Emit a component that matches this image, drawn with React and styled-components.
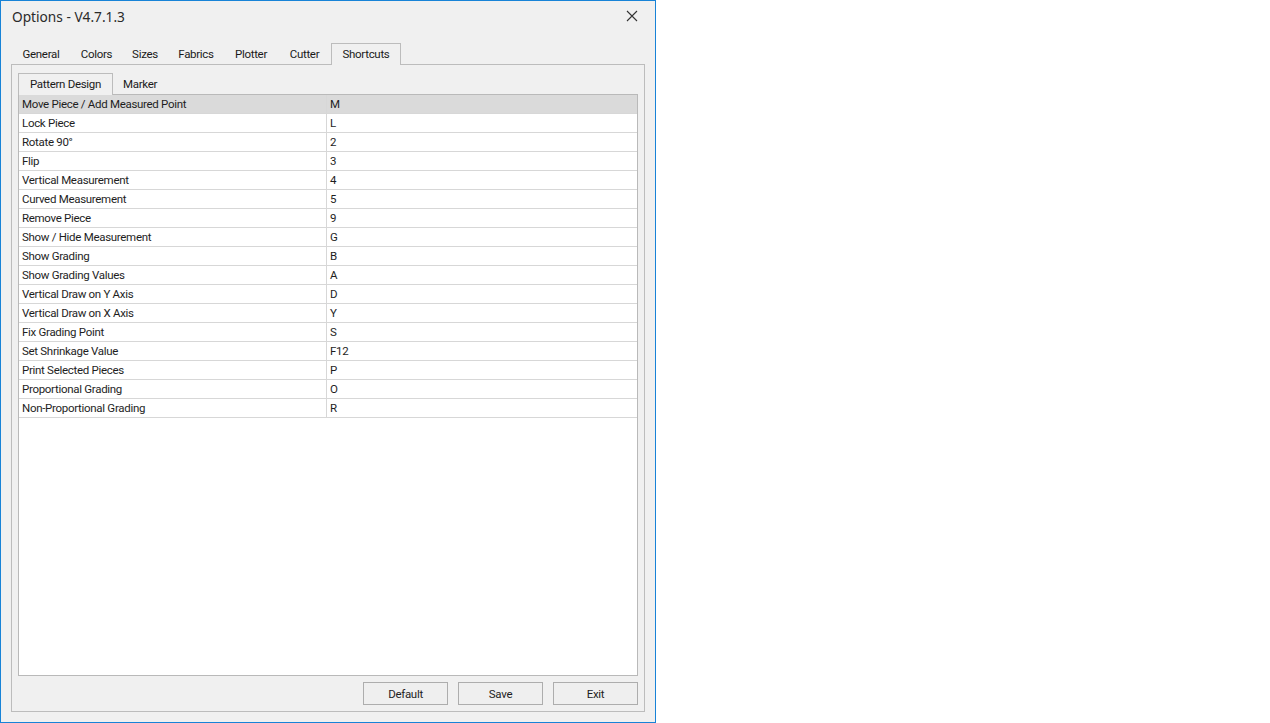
import { styled, createGlobalStyle } from 'styled-components';

const Global = createGlobalStyle`
  html, body { margin: 0; padding: 0; background: #ffffff; }
  body { font-family: Roboto, "Noto Sans", sans-serif; }
  * { box-sizing: border-box; }
`;

// tab label + width in px, as the WinForms tab control sizes them
const outerTabs = [
  ['General', 60],
  ['Colors', 51],
  ['Sizes', 46],
  ['Fabrics', 56],
  ['Plotter', 54],
  ['Cutter', 53],
  ['Shortcuts', 70],
];
const innerTabs = [
  ['Pattern Design', 95],
  ['Marker', 54],
];

const shortcuts = [
  ['Move Piece / Add Measured Point', 'M'],
  ['Lock Piece', 'L'],
  ['Rotate 90°', '2'],
  ['Flip', '3'],
  ['Vertical Measurement', '4'],
  ['Curved Measurement', '5'],
  ['Remove Piece', '9'],
  ['Show / Hide Measurement', 'G'],
  ['Show Grading', 'B'],
  ['Show Grading Values', 'A'],
  ['Vertical Draw on Y Axis', 'D'],
  ['Vertical Draw on X Axis', 'Y'],
  ['Fix Grading Point', 'S'],
  ['Set Shrinkage Value', 'F12'],
  ['Print Selected Pieces', 'P'],
  ['Proportional Grading', 'O'],
  ['Non-Proportional Grading', 'R'],
];

const App = () => {
  return (
    <>
      <Global />
      <Window>
        <TitleBar>
          <Title>Options - V4.7.1.3</Title>
          <Close>
            <svg width="12" height="12" viewBox="0 0 12 12">
              <path d="M1 1 L11 11 M11 1 L1 11" stroke="#333" strokeWidth="1.1" fill="none" />
            </svg>
          </Close>
        </TitleBar>
        <Body>
          <TabStrip>
            {outerTabs.map(([t, w]) => (
              <Tab key={t} $w={w} $active={t === 'Shortcuts'}>{t}</Tab>
            ))}
          </TabStrip>
          <Panel>
            <TabStrip>
              {innerTabs.map(([t, w]) => (
                <Tab key={t} $w={w} $active={t === 'Pattern Design'}>{t}</Tab>
              ))}
            </TabStrip>
            <Grid>
              {shortcuts.map(([name, key], i) => (
                <Row key={name} $selected={i === 0}>
                  <NameCell>{name}</NameCell>
                  <KeyCell>{key}</KeyCell>
                </Row>
              ))}
            </Grid>
            <Buttons>
              <Button>Default</Button>
              <Button>Save</Button>
              <Button>Exit</Button>
            </Buttons>
          </Panel>
        </Body>
      </Window>
    </>
  );
};

const Window = styled.div`
  width: 656px;
  height: 723px;
  border: 1px solid #1883d7;
  background: #f0f0f0;
  display: flex;
  flex-direction: column;
  letter-spacing: -0.3px;
`;

const TitleBar = styled.div`
  height: 31px;
  display: flex;
  align-items: center;
  justify-content: space-between;
  padding: 0 17px 0 11px;
`;

const Title = styled.div`
  font-family: "Noto Sans", sans-serif;
  font-size: 13.7px;
  letter-spacing: 0;
  color: #2a2a2a;
  margin-top: -1px;
`;

const Close = styled.div`
  width: 12px;
  height: 12px;
  display: flex;
  margin-top: -1px;
`;

const Body = styled.div`
  flex: 1;
  display: flex;
  flex-direction: column;
  padding: 11px 10px 10px 10px;
`;

const TabStrip = styled.div`
  display: flex;
  height: 21px;
  position: relative;
  z-index: 1;
`;

const Tab = styled.div`
  width: ${(p) => p.$w}px;
  font-size: 11.5px;
  color: #1a1a1a;
  display: flex;
  align-items: center;
  justify-content: center;
  height: ${(p) => (p.$active ? '22px' : '21px')};
  padding-bottom: ${(p) => (p.$active ? '1px' : '0')};
  border: 1px solid ${(p) => (p.$active ? '#bcbcbc' : 'transparent')};
  border-bottom: none;
  background: ${(p) => (p.$active ? '#f0f0f0' : 'transparent')};
  white-space: nowrap;
`;

const Panel = styled.div`
  flex: 1;
  border: 1px solid #bcbcbc;
  display: flex;
  flex-direction: column;
  padding: 8px 6px 6px 6px;
`;

const Grid = styled.div`
  flex: 1;
  background: #ffffff;
  border: 1px solid #b9b9b9;
  display: flex;
  flex-direction: column;
`;

const Row = styled.div`
  display: grid;
  grid-template-columns: 308px 1fr;
  height: 19px;
  border-bottom: 1px solid #d7d7d7;
  background: ${(p) => (p.$selected ? '#dadada' : '#ffffff')};
  font-size: 11.5px;
  color: #1e1e1e;
`;

const NameCell = styled.div`
  padding-left: 3px;
  display: flex;
  align-items: center;
  border-right: 1px solid #d7d7d7;
  white-space: nowrap;
  overflow: hidden;
`;

const KeyCell = styled.div`
  padding-left: 3px;
  display: flex;
  align-items: center;
`;

const Buttons = styled.div`
  display: flex;
  justify-content: flex-end;
  gap: 10px;
  margin-top: 6px;
`;

const Button = styled.button`
  width: 85px;
  height: 23px;
  border: 1px solid #adadad;
  background: #efefef;
  font-family: inherit;
  letter-spacing: inherit;
  font-size: 11.5px;
  color: #1e1e1e;
  padding: 0;
`;

export default App;
